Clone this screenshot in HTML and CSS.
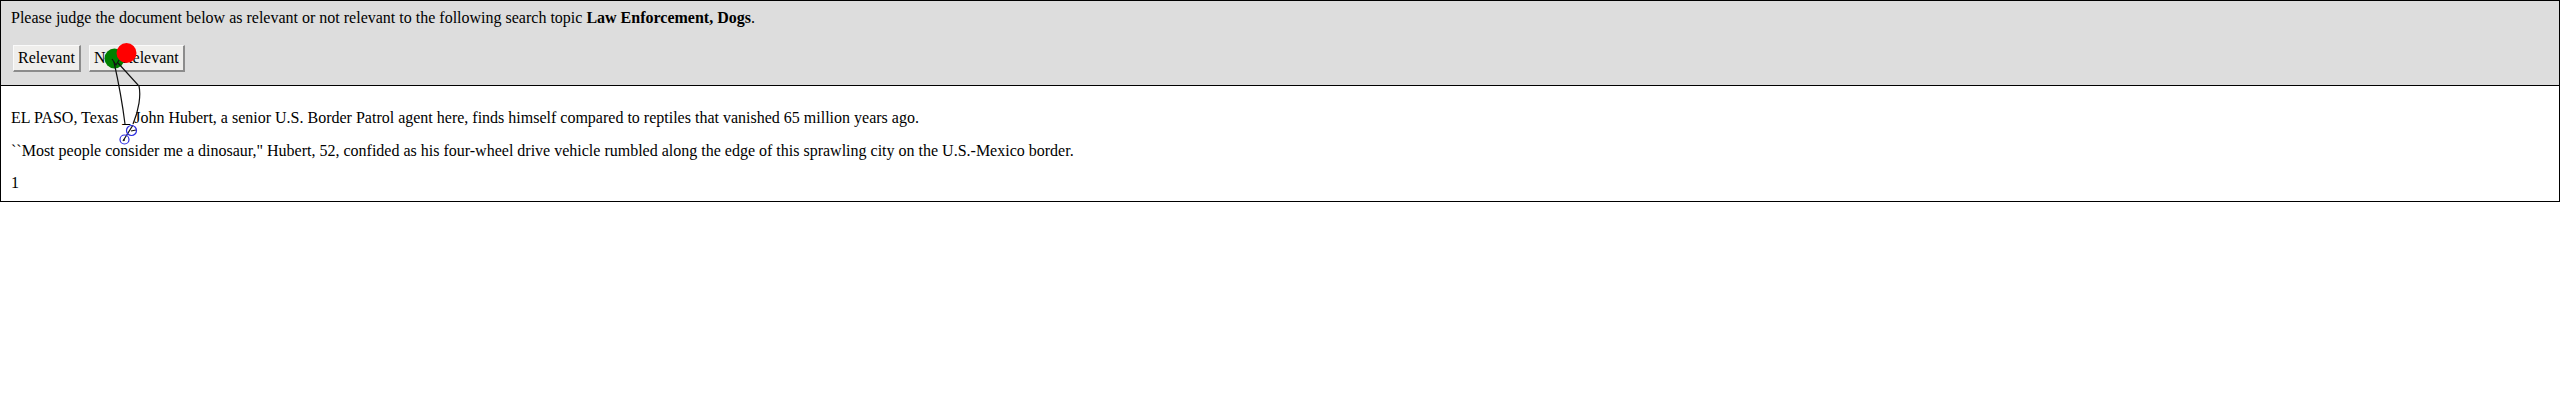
FILE: index.html
```html
<!DOCTYPE html>
<html>
<head>
<meta charset="utf-8">
<title>Relevance judgement</title>
<link rel="stylesheet" href="styles.css">
</head>
<body>
<div class="frame">
  <div class="header">
    <div class="prompt">Please judge the document below as relevant or not relevant to the following search topic <b>Law Enforcement, Dogs</b>.</div>
    <div class="actions">
      <button class="btn">Relevant</button>
      <button class="btn">Not Relevant</button>
    </div>
  </div>
  <div class="doc">
    <p>EL PASO, Texas _ John Hubert, a senior U.S. Border Patrol agent here, finds himself compared to reptiles that vanished 65 million years ago.</p>
    <p>``Most people consider me a dinosaur," Hubert, 52, confided as his four-wheel drive vehicle rumbled along the edge of this sprawling city on the U.S.-Mexico border.</p>
    <p>1</p>
  </div>
</div>
<svg class="trace" width="200" height="160" viewBox="0 0 200 160">
  <circle cx="114.5" cy="58.5" r="10" fill="#008000"/>
  <circle cx="126.5" cy="53" r="10" fill="#ff0000"/>
  <g fill="none" stroke="#111" stroke-width="1.2">
    <path d="M112 59 L116 65 L119 60"/>
    <path d="M114 62 C118 80 122 100 125 124"/>
    <path d="M118 63 L139 86 C141 95 139 110 133 124"/>
    <path d="M133 125 L123 141"/>
    <path d="M131 131 L136 130"/>
  </g>
  <g fill="none" stroke="#2a2ae0" stroke-width="1.2">
    <circle cx="131.5" cy="130.5" r="5"/>
    <circle cx="124.5" cy="139.5" r="4.5"/>
  </g>
  <circle cx="124" cy="140" r="1" fill="#222"/>
</svg>
</body>
</html>
```
FILE: styles.css
```css
html, body {
  margin: 0;
  padding: 0;
  background: #fff;
}
body {
  position: relative;
  font-family: "Liberation Serif", "Times New Roman", serif;
  font-size: 16px;
  color: #000;
}
.frame {
  border: 1px solid #000;
}
.header {
  background: #dddddd;
  border-bottom: 1px solid #000;
  padding: 8px 10px 13px;
}
.prompt {
  line-height: 18px;
}
.actions {
  display: flex;
  gap: 8px;
  margin-top: 18px;
  padding-left: 2px;
}
.btn {
  box-sizing: border-box;
  height: 27px;
  margin: 0;
  padding: 0 4px;
  font-family: "Liberation Serif", "Times New Roman", serif;
  font-size: 16px;
  color: #000;
  background: #efeeec;
  border-style: solid;
  border-width: 1px 2px 2px 1px;
  border-color: #fafafa #8c8c8c #8c8c8c #fafafa;
}
.doc {
  display: flex;
  flex-direction: column;
  gap: 14.5px;
  padding: 23px 10px 9px;
}
.doc p {
  margin: 0;
  line-height: 18px;
}
.trace {
  position: absolute;
  left: 0;
  top: 0;
  pointer-events: none;
}
```
